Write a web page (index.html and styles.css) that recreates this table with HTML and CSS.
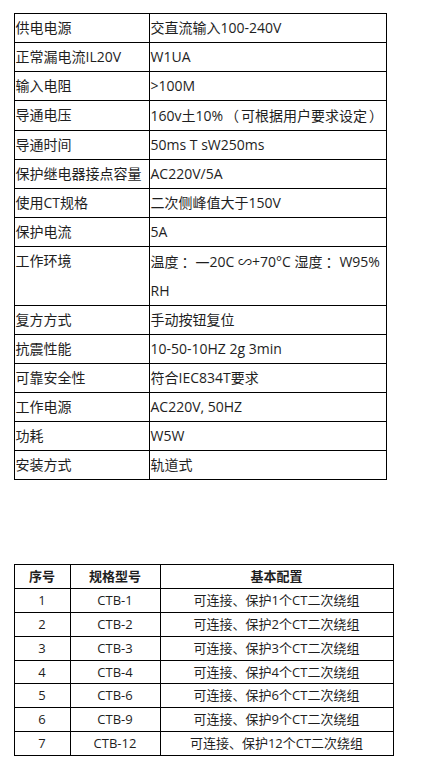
FILE: index.html
```html
<!DOCTYPE html>
<html lang="zh-CN">
<head>
<meta charset="utf-8">
<title>参数</title>
<link rel="stylesheet" href="styles.css">
</head>
<body>
<div class="page">
  <table class="spec">
    <colgroup><col class="c1"><col class="c2"></colgroup>
    <tbody>
      <tr><td>供电电源</td><td>交直流输入100-240V</td></tr>
      <tr><td>正常漏电流IL20V</td><td>W1UA</td></tr>
      <tr><td>输入电阻</td><td>&gt;100M</td></tr>
      <tr><td>导通电压</td><td>160v土10%<span class="punc">（</span>可根据用户要求设定<span class="punc">）</span></td></tr>
      <tr><td>导通时间</td><td>50ms T sW250ms</td></tr>
      <tr><td>保护继电器接点容量</td><td>AC220V/5A</td></tr>
      <tr><td>使用CT规格</td><td>二次侧峰值大于150V</td></tr>
      <tr><td>保护电流</td><td>5A</td></tr>
      <tr class="tall"><td>工作环境</td><td>温度<span class="colon">：</span>—20C <span class="wave">∽</span>+70°C 湿度<span class="colon">：</span>W95%<br>RH</td></tr>
      <tr><td>复方方式</td><td>手动按钮复位</td></tr>
      <tr><td>抗震性能</td><td>10-50-10HZ 2g 3min</td></tr>
      <tr><td>可靠安全性</td><td>符合IEC834T要求</td></tr>
      <tr><td>工作电源</td><td>AC220V, 50HZ</td></tr>
      <tr><td>功耗</td><td>W5W</td></tr>
      <tr><td>安装方式</td><td>轨道式</td></tr>
    </tbody>
  </table>

  <table class="models">
    <colgroup><col class="m1"><col class="m2"><col class="m3"></colgroup>
    <thead>
      <tr><th>序号</th><th>规格型号</th><th>基本配置</th></tr>
    </thead>
    <tbody>
      <tr><td>1</td><td>CTB-1</td><td>可连接、保护1个CT二次绕组</td></tr>
      <tr><td>2</td><td>CTB-2</td><td>可连接、保护2个CT二次绕组</td></tr>
      <tr><td>3</td><td>CTB-3</td><td>可连接、保护3个CT二次绕组</td></tr>
      <tr><td>4</td><td>CTB-4</td><td>可连接、保护4个CT二次绕组</td></tr>
      <tr><td>5</td><td>CTB-6</td><td>可连接、保护6个CT二次绕组</td></tr>
      <tr><td>6</td><td>CTB-9</td><td>可连接、保护9个CT二次绕组</td></tr>
      <tr><td>7</td><td>CTB-12</td><td>可连接、保护12个CT二次绕组</td></tr>
    </tbody>
  </table>
</div>
</body>
</html>
```

FILE: styles.css
```css
html, body {
  margin: 0;
  padding: 0;
  background: #fff;
}

.page {
  padding: 12.7px 0 0 13.5px;
  font-family: "Open Sans", "Noto Sans CJK SC", sans-serif;
  color: #1e1e1e;
}

table {
  border-collapse: collapse;
  table-layout: fixed;
}

td, th {
  border: 1px solid #000;
  padding: 0;
}

.spec {
  width: 372px;
  font-size: 14px;
}

.spec .c1 { width: 135px; }
.spec .c2 { width: 237px; }

.spec td {
  line-height: 28.1px;
  padding: 0 1px;
  text-align: left;
  vertical-align: top;
  white-space: nowrap;
}

.punc {
  font-family: "Noto Sans CJK TC", "Noto Sans CJK SC", sans-serif;
  padding: 0 2px;
}

.colon {
  font-family: "Noto Sans CJK SC", sans-serif;
  padding-left: 3px;
}

.wave {
  font-family: "Noto Sans CJK SC", sans-serif;
}

.models {
  margin-top: 84px;
  width: 379px;
  font-size: 13px;
}

.models .m1 { width: 56px; }
.models .m2 { width: 90px; }
.models .m3 { width: 233px; }

.models td, .models th {
  line-height: 22.85px;
  text-align: center;
  vertical-align: middle;
  white-space: nowrap;
}

.models th {
  font-weight: bold;
}
```
